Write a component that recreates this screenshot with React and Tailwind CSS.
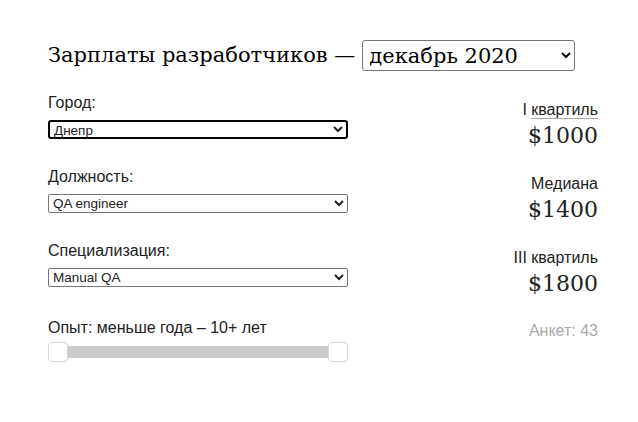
export default function App() {
  const serif = { fontFamily: 'Georgia, "DejaVu Serif", "Liberation Serif", serif' }
  return (
    <div className="w-[638px] h-[422px] bg-white text-[#222] font-['Liberation_Sans',Arial,sans-serif]">
      <div className="pl-[48px] pr-[40px] pt-[40px]">
        <h1 className="flex items-center gap-[7px] text-[21px] font-normal text-black" style={serif}>
          <span>Зарплаты разработчиков —</span>
          <select className="h-[31px] w-[213px] border border-[#767676] rounded-[3px] px-[2px] text-[21px] bg-white text-black" style={serif}>
            <option>декабрь 2020</option>
          </select>
        </h1>
        <div className="flex mt-[22px]">
          <div className="w-[300px] flex flex-col">
            <label className="text-[16px] leading-[18px]">Город:</label>
            <select className="mt-[8px] h-[19px] w-[300px] border-2 border-black rounded-[3px] text-[13.5px] leading-[15px] bg-white">
              <option>Днепр</option>
            </select>
            <label className="mt-[29px] text-[16px] leading-[18px]">Должность:</label>
            <select className="mt-[8px] h-[19px] w-[300px] border border-[#767676] rounded-[2px] text-[13.5px] leading-[15px] bg-white">
              <option>QA engineer</option>
            </select>
            <label className="mt-[29px] text-[16px] leading-[18px]">Специализация:</label>
            <select className="mt-[8px] h-[19px] w-[300px] border border-[#767676] rounded-[2px] text-[13.5px] leading-[15px] bg-white">
              <option>Manual QA</option>
            </select>
            <div className="mt-[32px] text-[16px] leading-[18px]">Опыт: меньше года – 10+ лет</div>
            <div className="relative mt-[5px] h-[20px]">
              <div className="absolute left-[2px] right-[2px] top-[4px] h-[12px] bg-[#cccccc]"></div>
              <div className="absolute left-0 top-0 w-[20px] h-[20px] rounded-[4px] border border-[#d3d3d3] bg-white"></div>
              <div className="absolute right-0 top-0 w-[20px] h-[20px] rounded-[4px] border border-[#d3d3d3] bg-white"></div>
            </div>
          </div>
          <div className="flex-1 flex flex-col items-end text-right">
            <div className="text-[16px] leading-[18px] mt-[7px]">
              I <span className="border-b border-[#aaa]">квартиль</span>
            </div>
            <div className="text-[22px] leading-[26px] mt-[4px]" style={serif}>$1000</div>
            <div className="text-[16px] leading-[18px] mt-[26px]">Медиана</div>
            <div className="text-[22px] leading-[26px] mt-[4px]" style={serif}>$1400</div>
            <div className="text-[16px] leading-[18px] mt-[26px]">III квартиль</div>
            <div className="text-[22px] leading-[26px] mt-[4px]" style={serif}>$1800</div>
            <div className="text-[16px] leading-[18px] mt-[25px] text-[#aaa]">Анкет: 43</div>
          </div>
        </div>
      </div>
    </div>
  )
}
